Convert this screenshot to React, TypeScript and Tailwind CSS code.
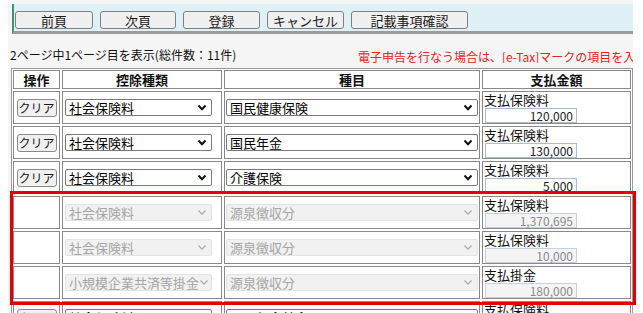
import React from "react";

const font = "font-['Noto_Sans_CJK_JP','Noto_Sans_CJK_SC',sans-serif]";

function Chevron({ disabled }: { disabled?: boolean }) {
  return (
    <svg width="10" height="7" viewBox="0 0 10 7" className="shrink-0">
      <polyline
        points="1.5,1.5 5,5.2 8.5,1.5"
        fill="none"
        stroke={disabled ? "#a8a8a8" : "#111"}
        strokeWidth={disabled ? 1.2 : 2}
      />
    </svg>
  );
}

function Select({ value, wide, disabled }: { value: string; wide?: boolean; disabled?: boolean }) {
  return (
    <div
      className={`flex items-center justify-between h-[17px] rounded-[2px] border pl-[3px] pr-[4px] text-[13px] leading-[15px] whitespace-nowrap overflow-hidden ${
        wide ? "w-[252px]" : "w-[147px]"
      } ${disabled ? "border-[#e4e4e4] bg-[#f1f1f1] text-[#a5a5a5]" : "border-[#7a7a7a] bg-white text-black"}`}
    >
      <span>{value}</span>
      <Chevron disabled={disabled} />
    </div>
  );
}

type Row = { kind: string; item: string; label: string; amount: string; disabled?: boolean };

const rows: Row[] = [
  { kind: "社会保険料", item: "国民健康保険", label: "支払保険料", amount: "120,000" },
  { kind: "社会保険料", item: "国民年金", label: "支払保険料", amount: "130,000" },
  { kind: "社会保険料", item: "介護保険", label: "支払保険料", amount: "5,000" },
  { kind: "社会保険料", item: "源泉徴収分", label: "支払保険料", amount: "1,370,695", disabled: true },
  { kind: "社会保険料", item: "源泉徴収分", label: "支払保険料", amount: "10,000", disabled: true },
  { kind: "小規模企業共済等掛金", item: "源泉徴収分", label: "支払掛金", amount: "180,000", disabled: true },
  { kind: "社会保険料", item: "国民年金基金", label: "支払保険料", amount: "60,000" },
];

const cell = "h-[33px] border border-[#8a8a8a] bg-white";
const head = "h-[19px] border border-[#8a8a8a] bg-white flex items-center justify-center font-bold text-[13px] leading-[15px] text-[#111]";

export default function App() {
  const buttons = [
    { t: "前頁", w: "w-[78px]" },
    { t: "次頁", w: "w-[76px]" },
    { t: "登録", w: "w-[77px]" },
    { t: "キャンセル", w: "w-[77px]" },
    { t: "記載事項確認", w: "w-[117px]" },
  ];
  return (
    <div className={`relative w-[643px] h-[313px] overflow-hidden bg-white ${font}`}>
      <div className="ml-[8px] w-[625px] h-full bg-[#f5f5f5] pt-[4px]">
        {/* toolbar */}
        <div className="ml-[4px] h-[30px] bg-[#dff0f6] border-l-2 border-l-[#3f9274] border-b-[3px] border-b-[#9c9c9c] flex items-start pt-[7px] pl-[1px] gap-[7px]">
          {buttons.map((b) => (
            <div
              key={b.t}
              className={`${b.w} h-[18px] rounded-[3px] border border-[#7f7f7f] bg-[#f0f0f0] flex items-center justify-center text-[13px] leading-[15px] text-[#1a1a1a]`}
            >
              {b.t}
            </div>
          ))}
        </div>

        {/* info line */}
        <div className="mt-[13px] h-[16px] flex items-start whitespace-nowrap overflow-hidden">
          <span className="w-[350px] shrink-0 pl-[2px] text-[12px] leading-[16px] text-[#111]">
            2ページ中1ページ目を表示(総件数：11件)
          </span>
          <span className="mt-[3px] text-[12px] leading-[14px] text-[#f02020]">
            電子申告を行なう場合は、[e-Tax]マークの項目を入力してください。
          </span>
        </div>

        {/* table */}
        <div className="mt-[5px] ml-[3px] w-[622px] grid grid-cols-[47px_160px_256px_149px] gap-[2px] p-[1px] border border-[#9a9a9a] bg-white">
          <div className={head}>操作</div>
          <div className={head}>控除種類</div>
          <div className={head}>種目</div>
          <div className={head}>支払金額</div>
          {rows.map((r, i) => (
            <React.Fragment key={i}>
              <div className={`${cell} flex items-center justify-center`}>
                {!r.disabled && (
                  <div className="w-[40px] h-[18px] rounded-[3px] border border-[#8a8a8a] bg-[#f0f0f0] flex items-center justify-center text-[12px] leading-[14px] text-[#1a1a1a]">
                    クリア
                  </div>
                )}
              </div>
              <div className={`${cell} flex items-center pl-[2px]`}>
                <Select value={r.kind} disabled={r.disabled} />
              </div>
              <div className={`${cell} flex items-center pl-[1px]`}>
                <Select value={r.item} wide disabled={r.disabled} />
              </div>
              <div className={`${cell} flex flex-col pl-[1px] overflow-hidden`}>
                <span className="text-[13px] leading-[15px] text-[#111]">{r.label}</span>
                <div
                  className={`mt-[1px] ml-[1px] w-[92px] h-[15px] shrink-0 border flex items-center justify-end pr-[3px] text-[12px] leading-[13px] ${
                    r.disabled
                      ? "border-[#c4d3e2] bg-[#f4f4f4] text-[#8a8a8a]"
                      : "border-[#a9bfd6] bg-white text-[#222]"
                  }`}
                >
                  {r.amount}
                </div>
              </div>
            </React.Fragment>
          ))}
        </div>
      </div>

      {/* annotation box */}
      <div className="absolute left-[10px] top-[191px] w-[626px] h-[114px] border-[3px] border-[#e60000]" />
    </div>
  );
}
